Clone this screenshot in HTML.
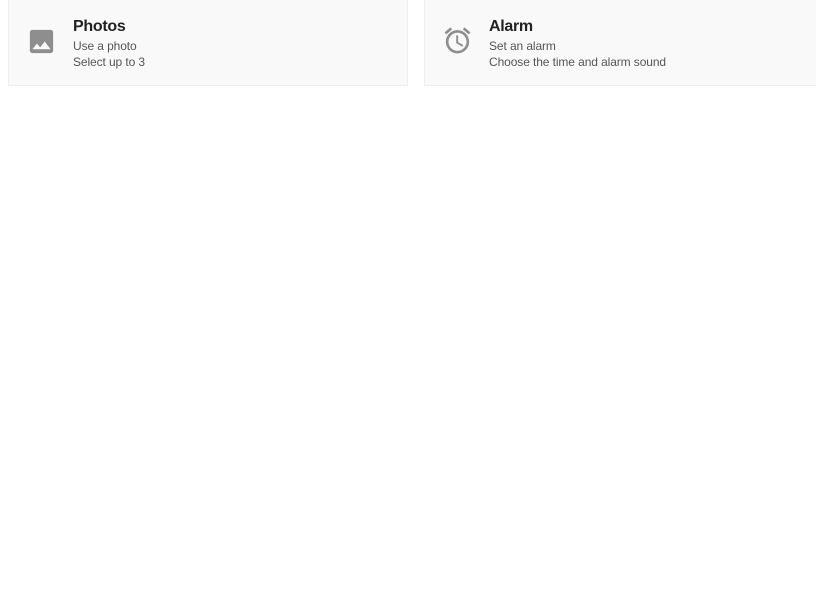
<!DOCTYPE html>
<html><head><style>
body{margin:0;background:#fff;font-family:"Liberation Sans",sans-serif;}
.card{position:absolute;top:0;height:85px;background:#f9f9f9;border:1px solid #eeeeee;border-top:none;box-sizing:border-box;}
.card svg{position:absolute;width:31px;height:31px;fill:#8e8e8e;}
.t{position:absolute;left:64px;top:18px;font-size:16px;font-weight:bold;color:#222;letter-spacing:-0.3px;}
.s{position:absolute;left:64px;top:38px;font-size:12px;color:#555;line-height:16px;letter-spacing:-0.1px;}
</style></head><body>
<div class="card" style="left:8px;width:400px;height:86px">
<svg viewBox="0 0 24 24" style="left:17px;top:26px"><path d="M21 19V5c0-1.1-.9-2-2-2H5c-1.1 0-2 .9-2 2v14c0 1.1.9 2 2 2h14c1.1 0 2-.9 2-2zM8.5 13.5l2.5 3.01L14.5 12l4.5 6H5l3.5-4.5z"/></svg>
<div class="t">Photos</div>
<div class="s">Use a photo<br>Select up to 3</div>
</div>
<div class="card" style="left:424px;width:400px;height:86px">
<svg viewBox="0 0 24 24" style="left:17px;top:25px"><path d="M22 5.72l-4.6-3.860-1.29 1.53 4.6 3.86L22 5.72zM7.88 3.39L6.6 1.86 2 5.71l1.29 1.53 4.59-3.85zM12.5 8H11v6l4.75 2.85.75-1.23-4-2.37V8zM12 4c-4.97 0-9 4.03-9 9s4.02 9 9 9c4.97 0 9-4.03 9-9s-4.03-9-9-9zm0 16c-3.87 0-7-3.13-7-7s3.13-7 7-7 7 3.13 7 7-3.13 7-7 7z"/></svg>
<div class="t">Alarm</div>
<div class="s">Set an alarm<br>Choose the time and alarm sound</div>
</div>
</body></html>
